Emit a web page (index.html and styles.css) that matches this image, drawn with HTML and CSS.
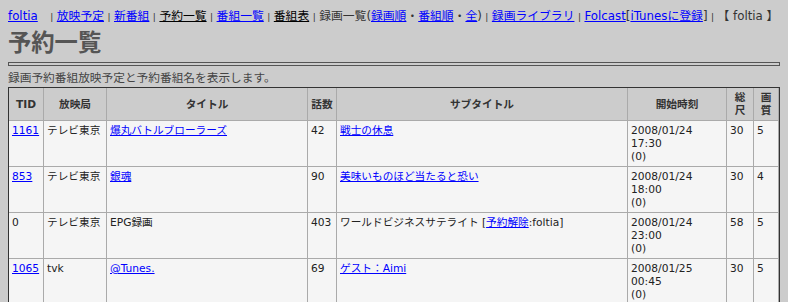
FILE: index.html
```html
<!DOCTYPE html>
<html lang="ja">
<head>
  <meta charset="UTF-8" />
  <title>予約一覧</title>
  <link rel="stylesheet" href="styles.css">
</head>
<body>
  <div class="nav">
    <a href="#">foltia</a><span class="sep first">|</span><a href="#">放映予定</a><span class="sep">|</span><a href="#">新番組</a><span class="sep">|</span><a href="#" class="cur">予約一覧</a><span class="sep">|</span><a href="#">番組一覧</a><span class="sep">|</span><a href="#" class="cur">番組表</a><span class="sep">|</span>録画一覧(<a href="#">録画順</a>・<a href="#">番組順</a>・<a href="#">全</a>)<span class="sep">|</span><a href="#">録画ライブラリ</a><span class="sep">|</span><a href="#">Folcast</a>[<a href="#">iTunesに登録</a>]<span class="sep">|</span>【 foltia 】
  </div>

  <h1>予約一覧</h1>
  <div class="rule"></div>
  <p class="lead">録画予約番組放映予定と予約番組名を表示します。</p>

  <table class="list">
    <tr>
      <th class="c-tid">TID</th>
      <th class="c-st">放映局</th>
      <th class="c-title">タイトル</th>
      <th class="c-ep">話数</th>
      <th class="c-sub">サブタイトル</th>
      <th class="c-time">開始時刻</th>
      <th class="c-len">総尺</th>
      <th>画質</th>
    </tr>
    <tr>
      <td><a href="#">1161</a></td>
      <td>テレビ東京</td>
      <td><a href="#">爆丸バトルブローラーズ</a></td>
      <td>42</td>
      <td><a href="#">戦士の休息</a></td>
      <td>2008/01/24<br>17:30<br>(0)</td>
      <td>30</td>
      <td>5</td>
    </tr>
    <tr>
      <td><a href="#">853</a></td>
      <td>テレビ東京</td>
      <td><a href="#">銀魂</a></td>
      <td>90</td>
      <td><a href="#">美味いものほど当たると恐い</a></td>
      <td>2008/01/24<br>18:00<br>(0)</td>
      <td>30</td>
      <td>4</td>
    </tr>
    <tr>
      <td>0</td>
      <td>テレビ東京</td>
      <td>EPG録画</td>
      <td>403</td>
      <td>ワールドビジネスサテライト [<a href="#">予約解除</a>:foltia]</td>
      <td>2008/01/24<br>23:00<br>(0)</td>
      <td>58</td>
      <td>5</td>
    </tr>
    <tr>
      <td><a href="#">1065</a></td>
      <td>tvk</td>
      <td><a href="#">@Tunes.</a></td>
      <td>69</td>
      <td><a href="#">ゲスト：Aimi</a></td>
      <td>2008/01/25<br>00:45<br>(0)</td>
      <td>30</td>
      <td>5</td>
    </tr>
  </table>
</body>
</html>
```

FILE: styles.css
```css
body {
  margin: 8px;
  background: #cccccc;
  color: #333;
  font-family: "DejaVu Sans", "Noto Sans CJK JP", sans-serif;
}
a { color: #0000ff; }
a.cur { color: #000; }

.nav {
  font-size: 11.8px;
  line-height: 16px;
  white-space: nowrap;
}
.nav .sep {
  display: inline-block;
  width: 10px;
  text-align: center;
  font-size: 9px;
  color: #333;
}
.nav .sep.first { margin-left: 9px; }

h1 {
  margin: 3px 0 0;
  font-size: 23.3px;
  line-height: 30px;
  color: #555;
  font-weight: bold;
}

.rule {
  height: 2px;
  border: 1px solid #555;
  margin-top: 4px;
}

.lead {
  margin: 5px 0 1px;
  font-size: 11.7px;
  line-height: 15px;
  color: #444;
}

.list {
  width: 100%;
  table-layout: fixed;
  border-collapse: separate;
  border-spacing: 0;
  border: 1px solid #333;
  background: #f5f5f5;
  font-size: 10.67px;
  line-height: 13px;
  color: #222;
}
.list th, .list td {
  box-sizing: border-box;
  padding: 3px;
  border-right: 1px solid #aaa;
  border-bottom: 1px solid #aaa;
  text-align: left;
  vertical-align: top;
}
.list th {
  background: #cccccc;
  color: #333;
  text-align: center;
  vertical-align: middle;
}
.list .c-tid { width: 35px; }
.list .c-st { width: 63px; }
.list .c-title { width: 201px; }
.list .c-ep { width: 29px; }
.list .c-sub { width: 291px; }
.list .c-time { width: 99px; }
.list .c-len { width: 27px; }
```
